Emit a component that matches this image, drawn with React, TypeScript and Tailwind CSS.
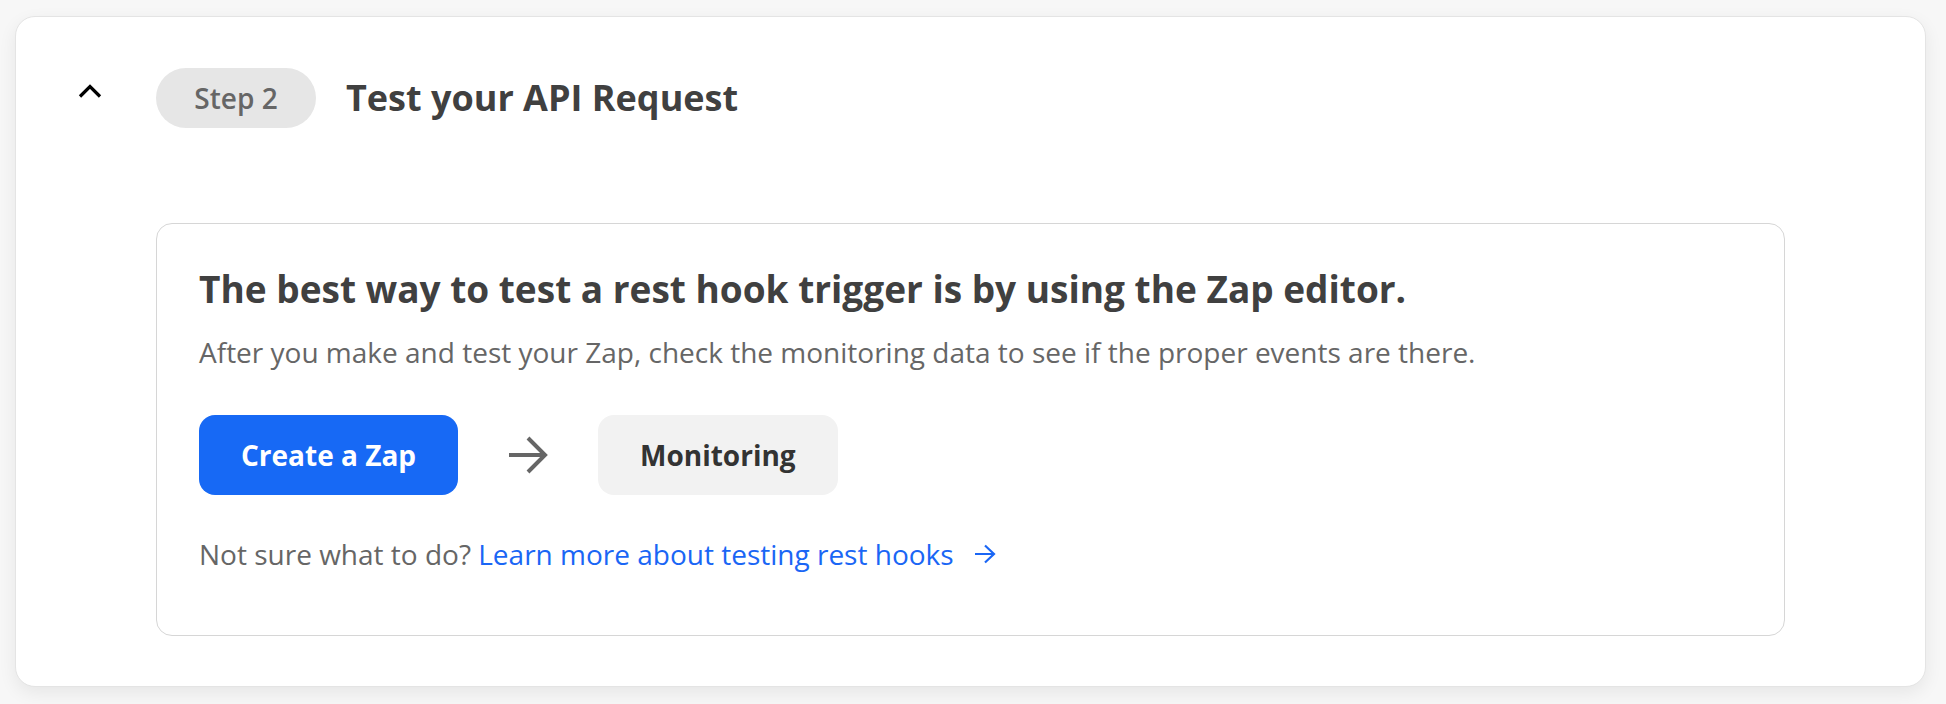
export default function App() {
  return (
    <div className="min-h-screen bg-[#f7f7f7] pl-[15px] pr-[20px] pt-[16px] font-['Open_Sans',sans-serif]">
      <div className="grid grid-cols-[24px_1fr] gap-x-[54px] gap-y-[95px] rounded-[20px] border border-[#e4e4e4] bg-white pl-[62px] pr-[140px] pt-[51px] pb-[50px] shadow-[0_6px_18px_rgba(0,0,0,0.07)]">
        <div className="flex h-[60px] items-center">
          <svg width="24" height="14" viewBox="0 0 24 14" className="mb-[14px]">
            <polyline points="2,12.5 12,2.5 22,12.5" fill="none" stroke="#000" strokeWidth="3.2" />
          </svg>
        </div>
        <div className="flex items-center gap-[30px]">
          <span className="flex h-[60px] w-[160px] items-center justify-center rounded-full bg-[#e6e6e6] text-[28px] font-semibold text-[#666]">
            Step 2
          </span>
          <h2 className="text-[36px] font-bold text-[#404040]">Test your API Request</h2>
        </div>

        <div />
        <div className="rounded-2xl border-[1.5px] border-[#d6d6d6] px-[42px] pt-[43px] pb-[62px]">
          <h3 className="text-[37px] leading-[44px] font-bold text-[#404040]">
            The best way to test a rest hook trigger is by using the Zap editor.
          </h3>
          <p className="mt-[22px] text-[28px] leading-[38px] text-[#666]">
            After you make and test your Zap, check the monitoring data to see if the proper events are there.
          </p>
          <div className="mt-[44px] flex items-center gap-[50px]">
            <button className="h-[80px] rounded-[16px] bg-[#1769f5] px-[42px] text-[28px] font-bold text-white">
              Create a Zap
            </button>
            <svg width="40" height="40" viewBox="0 0 40 40">
              <path d="M1 20H37M20 3L37 20L20 37" fill="none" stroke="#666" strokeWidth="4" />
            </svg>
            <button className="h-[80px] rounded-[16px] bg-[#f2f2f2] px-[42px] text-[28px] font-bold text-[#333]">
              Monitoring
            </button>
          </div>
          <p className="mt-[40px] flex items-center text-[28px] leading-[38px] text-[#666]">
            <span>Not sure what to do?&nbsp;</span>
            <a className="flex items-center gap-[20px] text-[#1a66f5]">
              Learn more about testing rest hooks
              <svg width="22" height="20" viewBox="0 0 22 20">
                <path d="M1 10H20M11 1.5L20 10L11 18.5" fill="none" stroke="#1a66f5" strokeWidth="2.2" />
              </svg>
            </a>
          </p>
        </div>
      </div>
    </div>
  )
}
